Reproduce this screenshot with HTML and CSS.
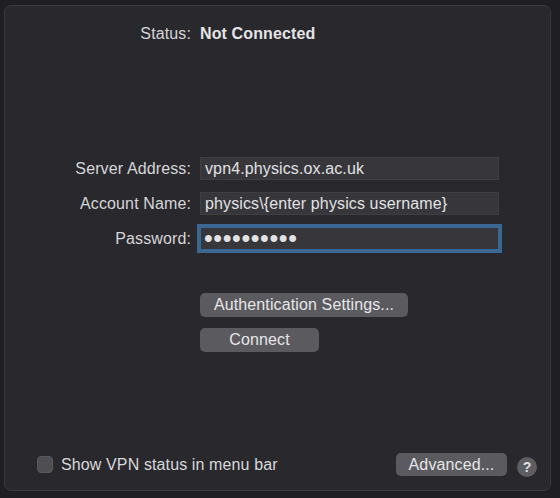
FILE: index.html
```html
<!DOCTYPE html>
<html lang="en">
<head>
  <meta charset="UTF-8">
  <meta name="viewport" content="width=device-width, initial-scale=1.0">
  <title>VPN (L2TP)</title>
  <link rel="stylesheet" href="styles.css">
</head>
<body>
  <div class="panel">
    <div class="status-row">
      <span class="label">Status:</span>
      <span class="status-value">Not Connected</span>
    </div>

    <div class="form-grid">
      <label class="label" for="server">Server Address:</label>
      <input class="field" id="server" type="text" value="vpn4.physics.ox.ac.uk" readonly>

      <label class="label" for="account">Account Name:</label>
      <input class="field" id="account" type="text" value="physics\{enter physics username}" readonly>

      <label class="label" for="password">Password:</label>
      <input class="field field-focus password" id="password" type="password" value="abcdefghij" readonly>
    </div>

    <div class="actions">
      <button class="btn btn-auth">Authentication Settings...</button>
      <button class="btn btn-connect">Connect</button>
    </div>

    <div class="footer">
      <label class="check">
        <span class="check-box"></span>
        <span>Show VPN status in menu bar</span>
      </label>
      <div class="footer-right">
        <button class="btn btn-advanced">Advanced...</button>
        <button class="help">?</button>
      </div>
    </div>
  </div>
</body>
</html>
```

FILE: styles.css
```css
* {
  box-sizing: border-box;
}

body {
  margin: 0;
  padding: 5px 9px 7px 4px;
  background-color: #1f1f23;
  font-family: "Liberation Sans", Arial, sans-serif;
  font-size: 16px;
  letter-spacing: 0.12px;
  color: #dcdcde;
}

.panel {
  width: 547px;
  height: 486px;
  background-color: #29282d;
  border: 1px solid #3a393e;
  border-radius: 7px;
  display: flex;
  flex-direction: column;
  padding-top: 18px;
}

.status-row,
.form-grid {
  display: grid;
  grid-template-columns: 186px 299px;
  column-gap: 9px;
  align-items: center;
}

.label {
  text-align: right;
  line-height: 20px;
  color: #d6d6d8;
}

.status-value {
  font-weight: bold;
  line-height: 20px;
  color: #e4e4e6;
}

.form-grid {
  margin-top: 113px;
  row-gap: 12px;
}

.field {
  height: 23px;
  width: 299px;
  margin: 0;
  padding: 0 4px;
  background-color: #37363b;
  border: 1px solid #3f3e43;
  border-radius: 0;
  font-family: inherit;
  font-size: 16px;
  letter-spacing: 0.12px;
  color: #e2e2e4;
  outline: none;
}

.field-focus {
  box-shadow: 0 0 0 3px #3b6893;
  border-color: #3b6893;
}

/* bigger discs for the hidden password */
.password {
  font-size: 25px;
  letter-spacing: 0.6px;
  padding-left: 3px;
  line-height: 21px;
}

.actions {
  margin-top: 43px;
  margin-left: 195px;
  display: flex;
  flex-direction: column;
  align-items: flex-start;
  gap: 11px;
}

.btn {
  height: 24px;
  padding: 0;
  background-color: #5b5a5f;
  border: none;
  border-radius: 5px;
  font-family: inherit;
  font-size: 16px;
  letter-spacing: 0.12px;
  color: #e6e6e8;
  line-height: 24px;
}

.btn-auth {
  width: 208px;
}

.btn-connect {
  width: 119px;
}

.footer {
  margin-top: auto;
  padding: 0 13px 13px 32px;
  display: flex;
  align-items: center;
  justify-content: space-between;
}

.check {
  display: flex;
  align-items: center;
  gap: 8px;
  color: #d8d8da;
}

.check-box {
  width: 16px;
  height: 17px;
  border-radius: 4px;
  background-color: #4f4e53;
  border: 1px solid #58575c;
}

.footer-right {
  display: flex;
  align-items: center;
  gap: 10px;
}

.btn-advanced {
  width: 111px;
  height: 23px;
  line-height: 23px;
}

.help {
  width: 20px;
  height: 20px;
  margin-top: 5px;
  padding: 0;
  border: none;
  border-radius: 50%;
  background-color: #5e5d62;
  color: #e0e0e2;
  font-family: inherit;
  font-size: 14px;
  font-weight: bold;
  line-height: 20px;
}
```
